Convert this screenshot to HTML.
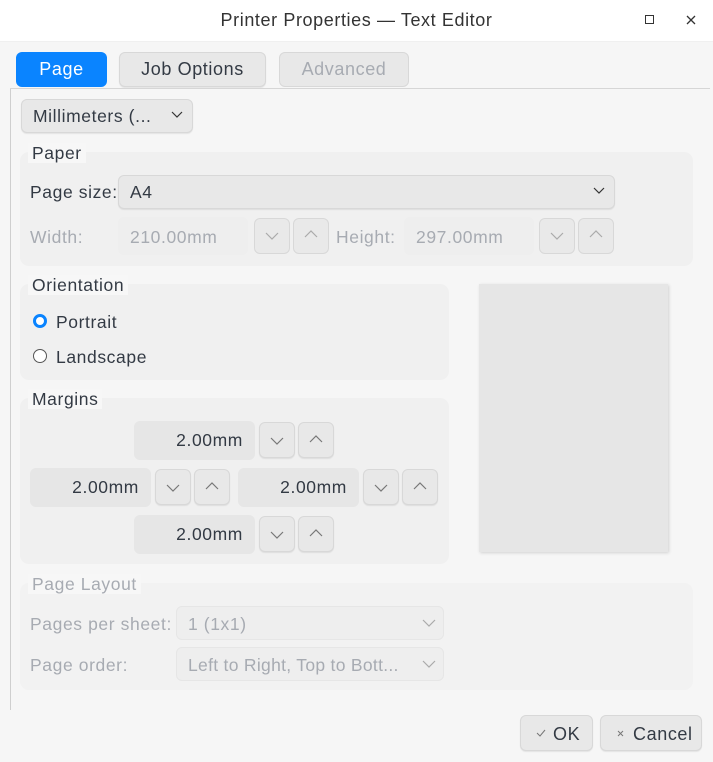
<!DOCTYPE html>
<html><head><meta charset="utf-8"><style>
*{box-sizing:border-box;margin:0;padding:0}
body{width:713px;height:762px;background:#f6f6f6;font-family:"Liberation Sans","DejaVu Sans",sans-serif;color:#333a44;font-size:17.5px;letter-spacing:0.6px;position:relative;overflow:hidden}
.a{position:absolute}
.t{position:absolute;white-space:nowrap;line-height:20px}
.btn{position:absolute;background:#e8e8e8;border:1px solid #d8d8d8;border-radius:6px;box-shadow:0 1px 1px rgba(0,0,0,.08)}
.dis{color:#a7abb2}
.grp{position:absolute;background:#f0f0f0;border-radius:9px}
.lbl{position:absolute;background:#f7f7f7;padding:0 4px 0 4px;line-height:20px;white-space:nowrap}
.fld{position:absolute;background:#e6e6e6;border-radius:6px;text-align:right;line-height:39px;padding-right:12px}
svg{position:absolute}
</style></head><body>
<div class="a" style="left:0;top:0;width:713px;height:42px;background:#fff;border-bottom:1px solid #f0f0f0"></div>
<div class="t" style="left:0;width:713px;text-align:center;top:10px;font-size:18px;color:#333">Printer Properties — Text Editor</div>
<div class="a" style="left:645px;top:15px;width:9px;height:9px;border:1.3px solid #333"></div>
<svg style="left:686px;top:15px" width="10" height="10"><path d="M1 1L9 9M9 1L1 9" stroke="#333" stroke-width="1.3"/></svg>

<div class="a" style="left:16px;top:52px;width:91px;height:35px;background:#0a84ff;border-radius:6px;color:#fff;text-align:center;line-height:35px;font-size:18px">Page</div>
<div class="btn" style="left:119px;top:52px;width:147px;height:35px;text-align:center;line-height:33px;font-size:18px">Job Options</div>
<div class="btn dis" style="left:279px;top:52px;width:130px;height:35px;text-align:center;line-height:33px;font-size:18px;box-shadow:none">Advanced</div>
<div class="a" style="left:10px;top:88px;width:1px;height:622px;background:#cfcfcf"></div>
<div class="a" style="left:10px;top:88px;width:700px;height:1px;background:#d6d6d6"></div>

<div class="btn" style="left:21px;top:99px;width:172px;height:34px"></div>
<div class="t" style="left:33px;top:106px">Millimeters (...</div>
<svg style="left:171px;top:111px" width="12" height="8"><path d="M1 1L6 6L11 1" stroke="#333" fill="none" stroke-width="1.2"/></svg>

<div class="grp" style="left:20px;top:152px;width:673px;height:114px"></div>
<div class="lbl" style="left:28px;top:143px">Paper</div>
<div class="t" style="left:30px;top:182px">Page size:</div>
<div class="btn" style="left:118px;top:175px;width:497px;height:34px"></div>
<div class="t" style="left:130px;top:182px">A4</div>
<svg style="left:593px;top:187px" width="12" height="8"><path d="M1 1L6 6L11 1" stroke="#333" fill="none" stroke-width="1.2"/></svg>
<div class="t dis" style="left:30px;top:227px">Width:</div>
<div class="a" style="left:118px;top:217px;width:130px;height:38px;background:#eeeeee;border-radius:6px"></div>
<div class="t dis" style="left:130px;top:227px">210.00mm</div>
<div class="btn" style="left:254px;top:218px;width:36px;height:36px;box-shadow:none;background:#e9e9e9"></div>
<div class="btn" style="left:293px;top:218px;width:36px;height:36px;box-shadow:none;background:#e9e9e9"></div>
<svg style="left:265px;top:232px" width="14" height="8"><path d="M1 1L7 7L13 1" stroke="#aaa" fill="none" stroke-width="1.2"/></svg>
<svg style="left:304px;top:230px" width="14" height="8"><path d="M1 7L7 1L13 7" stroke="#aaa" fill="none" stroke-width="1.2"/></svg>
<div class="t dis" style="left:336px;top:227px">Height:</div>
<div class="a" style="left:404px;top:217px;width:130px;height:38px;background:#eeeeee;border-radius:6px"></div>
<div class="t dis" style="left:416px;top:227px">297.00mm</div>
<div class="btn" style="left:539px;top:218px;width:36px;height:36px;box-shadow:none;background:#e9e9e9"></div>
<div class="btn" style="left:578px;top:218px;width:36px;height:36px;box-shadow:none;background:#e9e9e9"></div>
<svg style="left:550px;top:232px" width="14" height="8"><path d="M1 1L7 7L13 1" stroke="#aaa" fill="none" stroke-width="1.2"/></svg>
<svg style="left:589px;top:230px" width="14" height="8"><path d="M1 7L7 1L13 7" stroke="#aaa" fill="none" stroke-width="1.2"/></svg>

<div class="grp" style="left:20px;top:284px;width:429px;height:96px"></div>
<div class="lbl" style="left:28px;top:275px">Orientation</div>
<div class="a" style="left:33px;top:314px;width:14px;height:14px;border:3px solid #0a84ff;border-radius:50%;background:#fff"></div>
<div class="t" style="left:56px;top:312px">Portrait</div>
<div class="a" style="left:33px;top:349px;width:14px;height:14px;border:1px solid #555;border-radius:50%;background:#fff"></div>
<div class="t" style="left:56px;top:347px">Landscape</div>

<div class="a" style="left:479px;top:284px;width:189px;height:268px;background:#e6e6e6;box-shadow:1px 1px 3px rgba(0,0,0,.15)"></div>

<div class="grp" style="left:20px;top:398px;width:429px;height:166px"></div>
<div class="lbl" style="left:28px;top:389px">Margins</div>

<div class="fld" style="left:134px;top:421px;width:121px;height:39px">2.00mm</div>
<div class="btn" style="left:259px;top:422px;width:36px;height:36px"></div>
<div class="btn" style="left:298px;top:422px;width:36px;height:36px"></div>
<svg style="left:270px;top:437px" width="14" height="8"><path d="M1 1L7 7L13 1" stroke="#777" fill="none" stroke-width="1.2"/></svg>
<svg style="left:309px;top:435px" width="14" height="8"><path d="M1 7L7 1L13 7" stroke="#777" fill="none" stroke-width="1.2"/></svg>

<div class="fld" style="left:30px;top:468px;width:121px;height:39px">2.00mm</div>
<div class="btn" style="left:155px;top:469px;width:36px;height:36px"></div>
<div class="btn" style="left:194px;top:469px;width:36px;height:36px"></div>
<svg style="left:166px;top:484px" width="14" height="8"><path d="M1 1L7 7L13 1" stroke="#777" fill="none" stroke-width="1.2"/></svg>
<svg style="left:205px;top:482px" width="14" height="8"><path d="M1 7L7 1L13 7" stroke="#777" fill="none" stroke-width="1.2"/></svg>

<div class="fld" style="left:238px;top:468px;width:121px;height:39px">2.00mm</div>
<div class="btn" style="left:363px;top:469px;width:36px;height:36px"></div>
<div class="btn" style="left:402px;top:469px;width:36px;height:36px"></div>
<svg style="left:374px;top:484px" width="14" height="8"><path d="M1 1L7 7L13 1" stroke="#777" fill="none" stroke-width="1.2"/></svg>
<svg style="left:413px;top:482px" width="14" height="8"><path d="M1 7L7 1L13 7" stroke="#777" fill="none" stroke-width="1.2"/></svg>

<div class="fld" style="left:134px;top:515px;width:121px;height:39px">2.00mm</div>
<div class="btn" style="left:259px;top:516px;width:36px;height:36px"></div>
<div class="btn" style="left:298px;top:516px;width:36px;height:36px"></div>
<svg style="left:270px;top:531px" width="14" height="8"><path d="M1 1L7 7L13 1" stroke="#777" fill="none" stroke-width="1.2"/></svg>
<svg style="left:309px;top:529px" width="14" height="8"><path d="M1 7L7 1L13 7" stroke="#777" fill="none" stroke-width="1.2"/></svg>

<div class="grp" style="left:20px;top:583px;width:673px;height:107px;background:#f2f2f2"></div>
<div class="lbl dis" style="left:28px;top:574px">Page Layout</div>
<div class="t dis" style="left:30px;top:614px">Pages per sheet:</div>
<div class="btn" style="left:176px;top:606px;width:268px;height:34px;background:#eeeeee;box-shadow:none;border-color:#e6e6e6"></div>
<div class="t dis" style="left:188px;top:614px">1 (1x1)</div>
<svg style="left:422px;top:619px" width="14" height="8"><path d="M1 1L7 7L13 1" stroke="#aaa" fill="none" stroke-width="1.2"/></svg>
<div class="t dis" style="left:30px;top:655px">Page order:</div>
<div class="btn" style="left:176px;top:647px;width:268px;height:34px;background:#eeeeee;box-shadow:none;border-color:#e6e6e6"></div>
<div class="t dis" style="left:188px;top:655px;letter-spacing:0.3px">Left to Right, Top to Bott...</div>
<svg style="left:422px;top:660px" width="14" height="8"><path d="M1 1L7 7L13 1" stroke="#aaa" fill="none" stroke-width="1.2"/></svg>

<div class="btn" style="left:520px;top:715px;width:73px;height:36px"></div>
<svg style="left:536px;top:729px" width="10" height="8"><path d="M1 4L4 7L9 1" stroke="#777" fill="none" stroke-width="1"/></svg>
<div class="t" style="left:553px;top:724px;font-size:18px">OK</div>
<div class="btn" style="left:600px;top:715px;width:102px;height:36px"></div>
<svg style="left:617px;top:730px" width="7" height="7"><path d="M1 1L6 6M6 1L1 6" stroke="#777" stroke-width="1"/></svg>
<div class="t" style="left:633px;top:724px;font-size:18px">Cancel</div>
</body></html>
